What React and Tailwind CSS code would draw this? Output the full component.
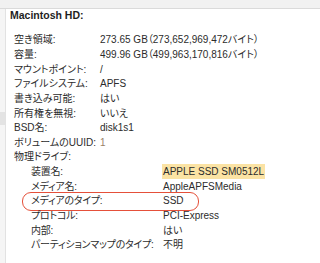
const volume = [
  { label: "空き領域:", value: "273.65 GB（273,652,969,472バイト）" },
  { label: "容量:", value: "499.96 GB（499,963,170,816バイト）" },
  { label: "マウントポイント:", value: "/" },
  { label: "ファイルシステム:", value: "APFS" },
  { label: "書き込み可能:", value: "はい" },
  { label: "所有権を無視:", value: "いいえ" },
  { label: "BSD名:", value: "disk1s1" },
  { label: "ボリュームのUUID:", value: "1", dim: true },
  { label: "物理ドライブ:", value: "" },
];

const drive = [
  { label: "装置名:", value: "APPLE SSD SM0512L", marked: true },
  { label: "メディア名:", value: "AppleAPFSMedia" },
  { label: "メディアのタイプ:", value: "SSD", circled: true },
  { label: "プロトコル:", value: "PCI-Express" },
  { label: "内部:", value: "はい" },
  { label: "パーティションマップのタイプ:", value: "不明" },
];

function Row({ label, value, dim, marked, circled, nested }) {
  return (
    <div className="relative flex h-[14.65px] items-center whitespace-nowrap">
      <div className={nested ? "w-[149px] pl-[17px] tracking-[-0.25px]" : "w-[86px]"}>{label}</div>
      <div className={dim ? "text-[#9a7f66]" : ""}>
        {marked ? (
          <span className="-ml-[1px] bg-[#fbe3a4] px-[1px] py-[2px]">{value}</span>
        ) : (
          value
        )}
      </div>
      {circled && (
        <div className="pointer-events-none absolute -top-[1.5px] left-[8px] h-[19px] w-[177px] rounded-[9px] border-[1.6px] border-[#e5503a]" />
      )}
    </div>
  );
}

export default function App() {
  return (
    <div
      className="flex h-[263px] w-[320px] flex-col overflow-hidden bg-white text-[10px] text-[#2c2c2c] [font-feature-settings:'palt']"
      style={{ fontFamily: '"Liberation Sans", "Noto Sans CJK JP", sans-serif' }}
    >
      <div className="h-[9px] shrink-0 border-b border-[#dadada] bg-[#f1f1f1]" />
      <div className="flex flex-1">
        <div className="w-[6px] shrink-0 border-r border-[#e2e2e2] bg-[#f5f5f5] pt-[103px]">
          <div className="h-[13px] bg-[#e3e3e3]" />
        </div>
        <div className="flex-1 pl-[4px]">
          <div className="flex h-[14px] items-center text-[10.5px] font-bold text-[#1e1e1e]">
            Macintosh HD:
          </div>
          <div className="mt-[9.5px] pl-[4px]">
            {volume.map((r) => (
              <Row key={r.label} {...r} />
            ))}
            {drive.map((r) => (
              <Row key={r.label} nested {...r} />
            ))}
          </div>
        </div>
      </div>
    </div>
  );
}
